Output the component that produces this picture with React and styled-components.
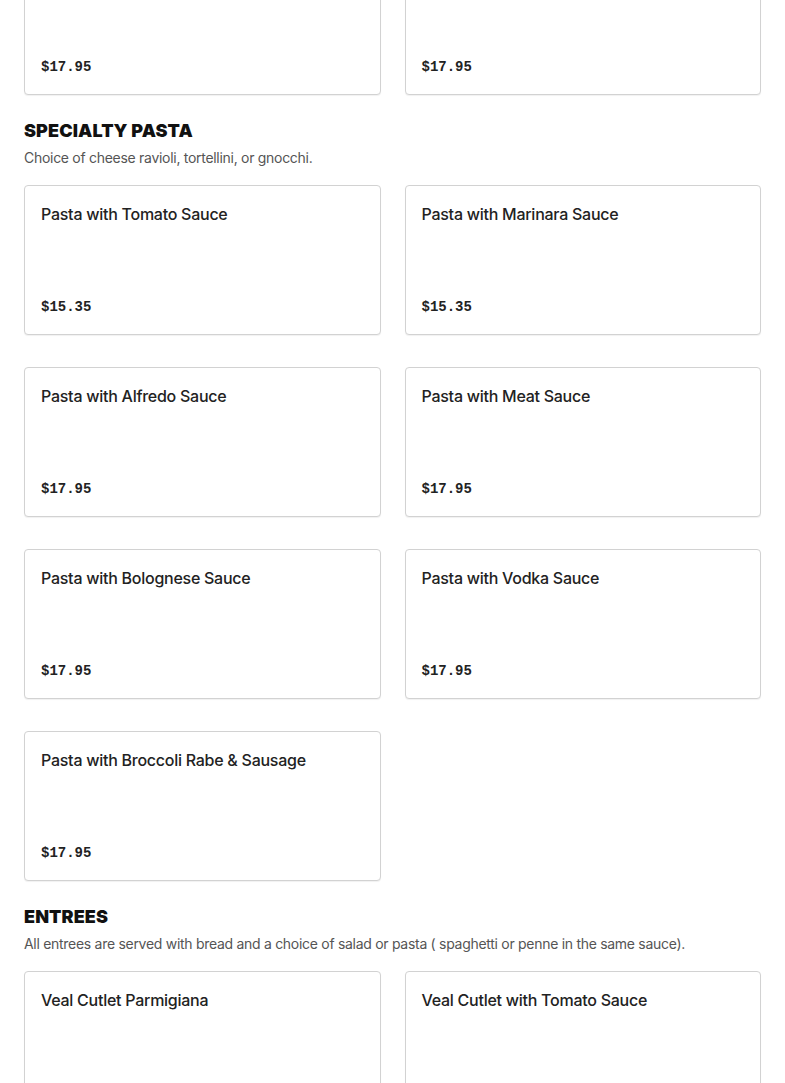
import React from "react";
import styled, { createGlobalStyle } from "styled-components";

const Global = createGlobalStyle`
  html, body { margin: 0; padding: 0; background: #fff; }
  body { font-family: Inter, "Noto Sans", Arial, sans-serif; color: #222; overflow: hidden; }
  * { box-sizing: border-box; }
`;

const Page = styled.div`
  margin-top: -55px;
  padding: 0 24px;
  display: flex;
  flex-direction: column;
  gap: 25px;
`;

const Section = styled.section`
  display: flex;
  flex-direction: column;
`;

const Heading = styled.h2`
  margin: 0;
  font-family: Inter, "Liberation Sans", sans-serif;
  font-weight: 900;
  font-size: 18px;
  line-height: 22px;
  letter-spacing: 0.1px;
  text-transform: uppercase;
  color: #111;
`;

const Description = styled.p`
  margin: 6px 0 0;
  font-size: 14px;
  line-height: 20px;
  letter-spacing: -0.29px;
  color: #555;
`;

const Grid = styled.div`
  margin-top: ${(p) => (p.$bare ? "0" : "17px")};
  display: grid;
  grid-template-columns: 1fr 1fr;
  column-gap: 24px;
  row-gap: 32px;
`;

const Card = styled.div`
  height: 150px;
  border: 1px solid #d2d2d2;
  border-radius: 4px;
  box-shadow: 0 1px 1px rgba(0, 0, 0, 0.06);
  padding: 16px 16px 17px;
  display: flex;
  flex-direction: column;
  justify-content: space-between;
  background: #fff;
`;

const Title = styled.div`
  font-size: 16px;
  line-height: 24px;
  font-weight: 500;
  letter-spacing: -0.26px;
  color: #222;
`;

const Price = styled.div`
  font-family: "Liberation Mono", "DejaVu Sans Mono", monospace;
  font-weight: 700;
  font-size: 14px;
  line-height: 20px;
  color: #222;
`;

const Item = ({ title, price }) => (
  <Card>
    <Title>{title}</Title>
    <Price>{price}</Price>
  </Card>
);

const specialty = [
  ["Pasta with Tomato Sauce", "$15.35"],
  ["Pasta with Marinara Sauce", "$15.35"],
  ["Pasta with Alfredo Sauce", "$17.95"],
  ["Pasta with Meat Sauce", "$17.95"],
  ["Pasta with Bolognese Sauce", "$17.95"],
  ["Pasta with Vodka Sauce", "$17.95"],
  ["Pasta with Broccoli Rabe & Sausage", "$17.95"],
];

const entrees = [
  ["Veal Cutlet Parmigiana", "$21.95"],
  ["Veal Cutlet with Tomato Sauce", "$21.95"],
];

export default function App() {
  return (
    <>
      <Global />
      <Page>
        <Grid $bare>
          <Item title="Pasta with Pesto Sauce" price="$17.95" />
          <Item title="Pasta with Clam Sauce" price="$17.95" />
        </Grid>
        <Section>
          <Heading>Specialty Pasta</Heading>
          <Description>Choice of cheese ravioli, tortellini, or gnocchi.</Description>
          <Grid>
            {specialty.map(([t, p]) => (
              <Item key={t} title={t} price={p} />
            ))}
          </Grid>
        </Section>
        <Section>
          <Heading>Entrees</Heading>
          <Description>
            All entrees are served with bread and a choice of salad or pasta ( spaghetti or penne in the same sauce).
          </Description>
          <Grid>
            {entrees.map(([t, p]) => (
              <Item key={t} title={t} price={p} />
            ))}
          </Grid>
        </Section>
      </Page>
    </>
  );
}
